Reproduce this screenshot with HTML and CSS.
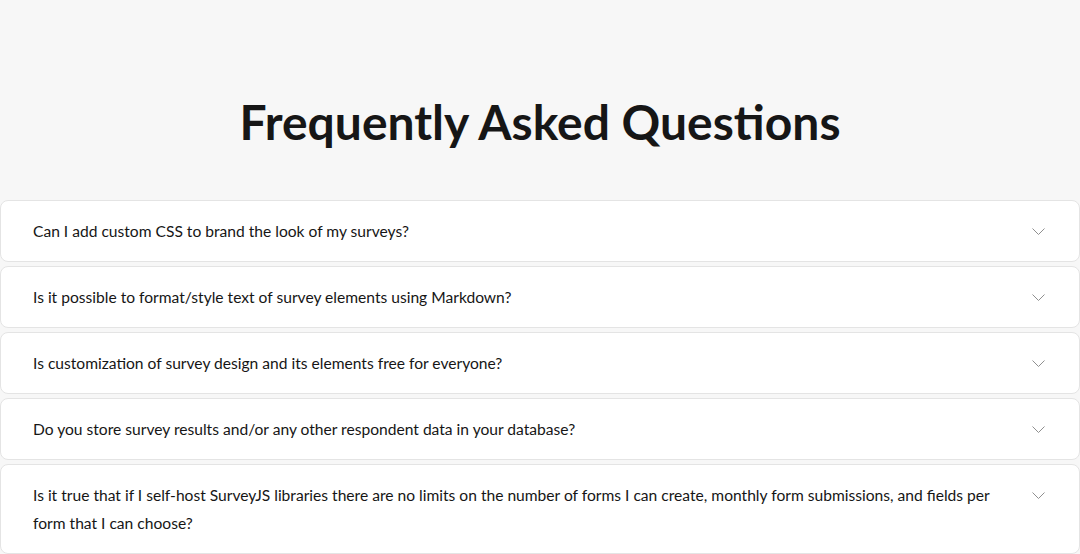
FILE: index.html
```html
<!DOCTYPE html>
<html lang="en">
<head>
<meta charset="utf-8">
<title>FAQ</title>
<link rel="stylesheet" href="styles.css">
</head>
<body>
<section class="faq">
  <h1 class="faq-title">Frequently Asked Questions</h1>
  <div class="faq-list">
    <div class="faq-item">
      <span class="faq-q">Can I add custom CSS to brand the look of my surveys?</span>
      <svg class="chev" viewBox="0 0 13 7" width="13" height="7"><path d="M0.5 0.5l6 6 6-6" fill="none" stroke="#8f8f8f" stroke-width="1"/></svg>
    </div>
    <div class="faq-item">
      <span class="faq-q">Is it possible to format/style text of survey elements using Markdown?</span>
      <svg class="chev" viewBox="0 0 13 7" width="13" height="7"><path d="M0.5 0.5l6 6 6-6" fill="none" stroke="#8f8f8f" stroke-width="1"/></svg>
    </div>
    <div class="faq-item">
      <span class="faq-q">Is customization of survey design and its elements free for everyone?</span>
      <svg class="chev" viewBox="0 0 13 7" width="13" height="7"><path d="M0.5 0.5l6 6 6-6" fill="none" stroke="#8f8f8f" stroke-width="1"/></svg>
    </div>
    <div class="faq-item">
      <span class="faq-q">Do you store survey results and/or any other respondent data in your database?</span>
      <svg class="chev" viewBox="0 0 13 7" width="13" height="7"><path d="M0.5 0.5l6 6 6-6" fill="none" stroke="#8f8f8f" stroke-width="1"/></svg>
    </div>
    <div class="faq-item">
      <span class="faq-q">Is it true that if I self-host SurveyJS libraries there are no limits on the number of forms I can create, monthly form submissions, and fields per form that I can choose?</span>
      <svg class="chev" viewBox="0 0 13 7" width="13" height="7"><path d="M0.5 0.5l6 6 6-6" fill="none" stroke="#8f8f8f" stroke-width="1"/></svg>
    </div>
  </div>
</section>
</body>
</html>
```
FILE: styles.css
```css
html, body {
  margin: 0;
  padding: 0;
  background: #f7f7f7;
  font-family: Lato, "Open Sans", sans-serif;
  color: #161616;
}
.faq {
  display: flex;
  flex-direction: column;
}
.faq-title {
  margin: 0;
  padding: 93px 0 49px;
  text-align: center;
  font-size: 48px;
  line-height: 58px;
  font-weight: 700;
  color: #161616;
}
.faq-list {
  display: flex;
  flex-direction: column;
  gap: 4px;
}
.faq-item {
  display: flex;
  align-items: flex-start;
  justify-content: space-between;
  gap: 40px;
  background: #fff;
  border: 1px solid #e4e4e4;
  border-radius: 8px;
  padding: 16px 34px 16px 32px;
}
.faq-q {
  font-size: 15.6px;
  line-height: 28px;
}
.chev {
  flex: none;
  margin-top: 11px;
}
```
